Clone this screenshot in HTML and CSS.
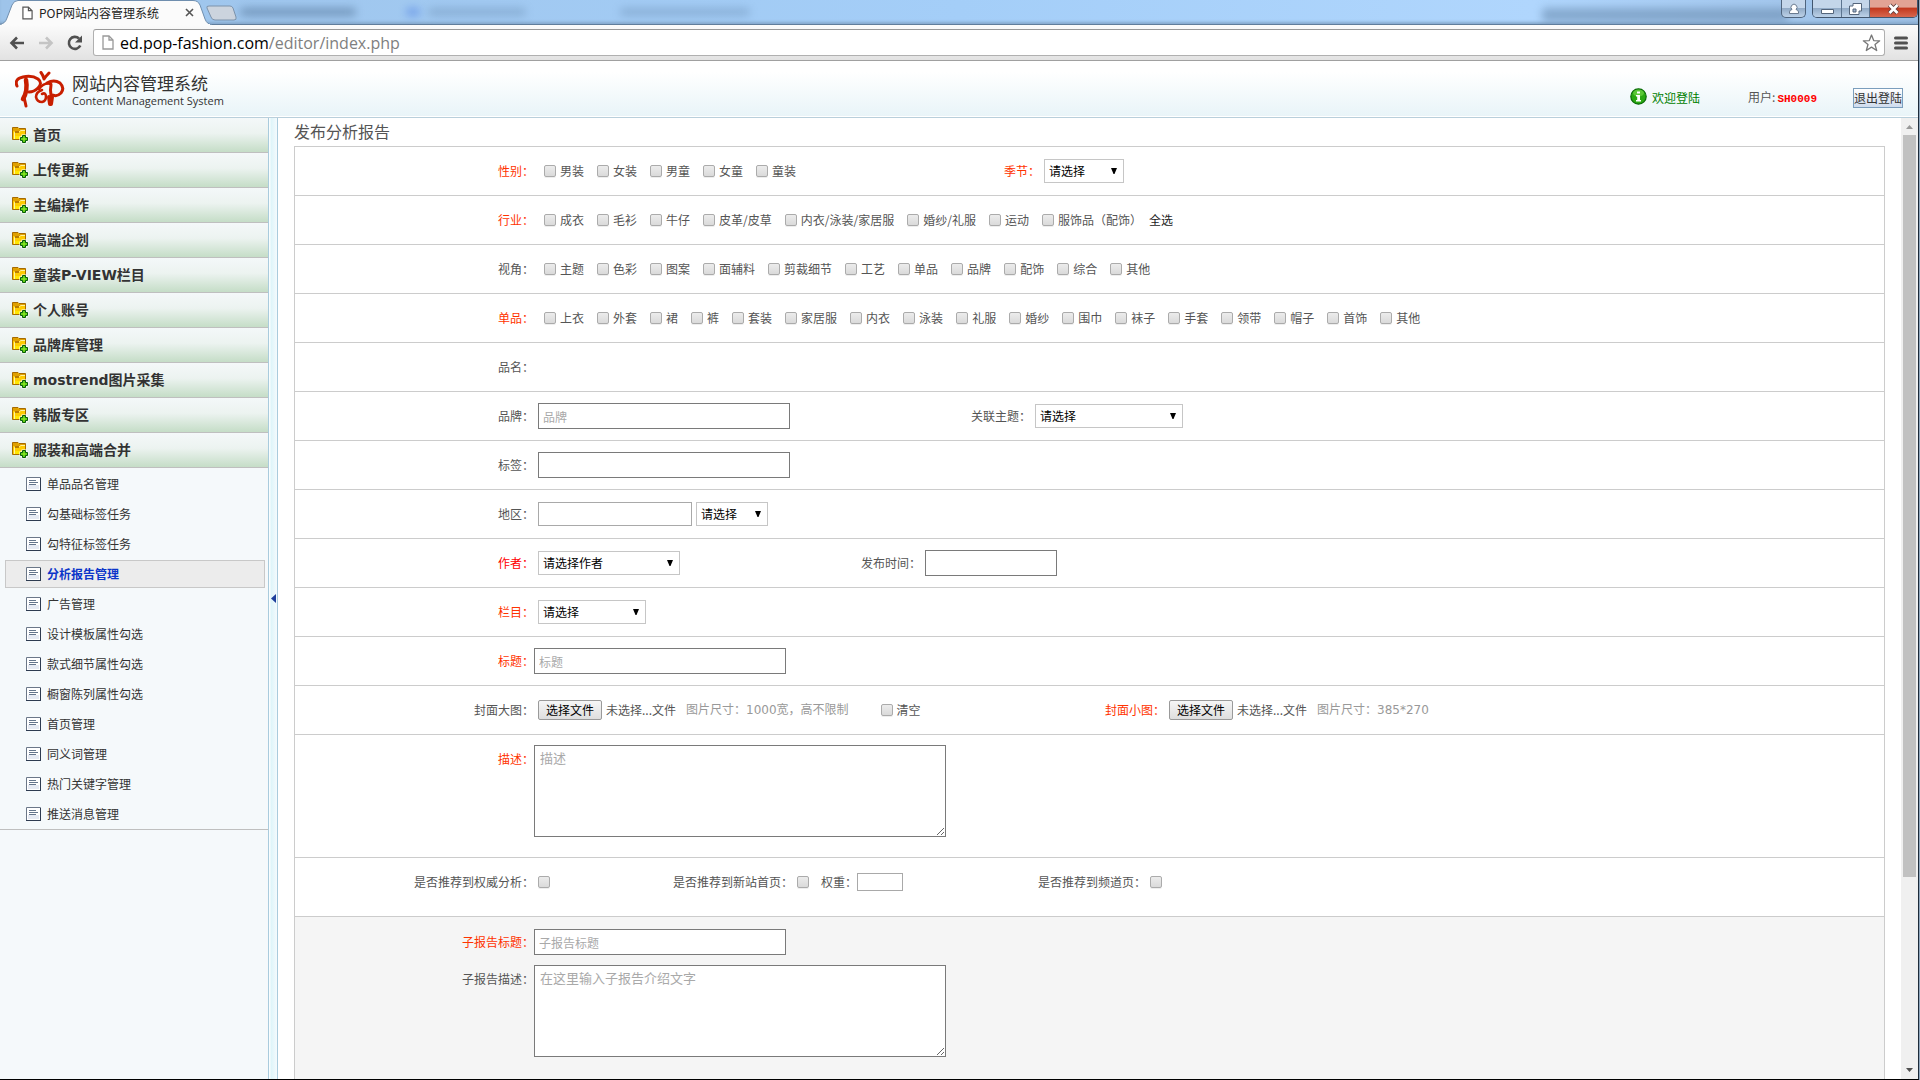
FILE: index.html
```html
<!DOCTYPE html>
<html lang="zh-CN">
<head>
<meta charset="utf-8">
<title>POP网站内容管理系统</title>
<link rel="stylesheet" href="styles.css">
</head>
<body>
<svg class="sprite" aria-hidden="true">
  <symbol id="i-folder" viewBox="0 0 17 17">
    <path d="M.5 12.500V.5H6l1 1h6.500v11z" fill="#fc0" stroke="#a76a00"/>
    <path d="M1 1h4.500l1 1H13v2H1z" fill="#e0a000"/>
    <path d="M2.500 12V5.500H7l1.500-2H13" fill="none" stroke="#fff3a0"/>
    <path d="M3 6h4V4H3z" fill="#b97c00"/>
    <path d="M3 9h10v3H3z" fill="#ffe600"/>
    <path d="M10.500 8.500h3v2h2v3h-2v2h-3v-2h-2v-3h2z" fill="#3c0" stroke="#fff" stroke-width="2"/>
    <path d="M10.500 8.500h3v2h2v3h-2v2h-3v-2h-2v-3h2z" fill="#2db400" stroke="#075c07"/>
    <path d="M12 9v6M9 12h6" stroke="#a4f22e"/>
  </symbol>
  <symbol id="i-doc" viewBox="0 0 15 14">
    <path d="M.5.5h14v13H.5z" fill="#fff" stroke="#6b7788"/>
    <path d="M2 8h11v4H2z" fill="#e6eaf3"/>
    <path d="M0 13.500h15M14.500 1v13" stroke="#2e3b50"/>
    <path d="M3 3.500h7M3 5.500h9M3 7.500h7" stroke="#65758c"/>
  </symbol>
  <symbol id="i-page" viewBox="0 0 12 15">
    <path d="M1 1h6l4 4v9H1z" fill="#fff" stroke="currentColor" stroke-width="1.300"/>
    <path d="M7 1v4h4" fill="none" stroke="currentColor" stroke-width="1.300"/>
  </symbol>
</svg>

<div class="window">
  <header class="tabstrip">
    <div class="ghosts" aria-hidden="true"><i></i><i></i><i></i><i></i><i></i></div>
    <div class="tab">
      <svg class="tab-shape" viewBox="0 0 212 25" preserveAspectRatio="none"><path d="M0 25V24Q5 24 7 18L12 5Q14 .5 18 .5H193Q198 .5 200 5L205 19Q207 24.500 212 24.500V25z" fill="#fbfbfb" stroke="#6f8eae"/><path d="M2 25H210" stroke="#fbfbfb" stroke-width="2"/></svg>
      <svg class="page-icon" width="11" height="14"><use href="#i-page"/></svg>
      <span class="tab-title">POP网站内容管理系统</span>
      <button class="tab-close" aria-label="关闭标签页"><svg width="9" height="9" viewBox="0 0 9 9"><path d="M1 1l7 7M8 1L1 8" stroke="#555" stroke-width="1.600"/></svg></button>
    </div>
    <button class="new-tab" aria-label="新标签页"><svg width="32" height="16" viewBox="0 0 32 16"><path d="M1 3Q0 1 3 1H24Q26 1 27 3L30 12Q31 15 28 15H9Q6 15 5 12z" fill="#ccd4de" stroke="#7d93ab"/></svg></button>
    <div class="win-controls">
      <button class="wc wc-user" aria-label="用户"><svg width="12" height="12" viewBox="0 0 12 12"><path d="M1.500 10.500V9Q1.500 7 4 6.500A3 3 0 1 1 8 6.500Q10.500 7 10.500 9v1.500z" fill="#fff" stroke="#6a7b90"/></svg></button>
      <div class="wc-set">
        <button class="wc" aria-label="最小化"><svg width="13" height="12" viewBox="0 0 13 12"><path d="M.5 6.500h12v4H.5z" fill="#fff" stroke="#54657b"/></svg></button>
        <button class="wc" aria-label="还原"><svg width="13" height="12" viewBox="0 0 13 12"><path d="M4 .5h8.500V8H10v3.500H.5V3H4z" fill="#fff" stroke="#54657b"/><path d="M4 6h3v3H4z" fill="#9fb5d0" stroke="#54657b"/></svg></button>
        <button class="wc wc-close" aria-label="关闭"><svg width="13" height="12" viewBox="0 0 13 12"><path d="M2.500 2l8 8M10.500 2l-8 8" stroke="#5b3a3a" stroke-width="4.500"/><path d="M2.500 2l8 8M10.500 2l-8 8" stroke="#fff" stroke-width="2.800"/></svg></button>
      </div>
    </div>
  </header>

  <nav class="toolbar">
    <button class="tool" aria-label="后退"><svg width="16" height="14" viewBox="0 0 16 14"><path d="M15 7H3M8 1.500L2.500 7 8 12.500" fill="none" stroke="#505050" stroke-width="2.600"/></svg></button>
    <button class="tool" aria-label="前进"><svg width="16" height="14" viewBox="0 0 16 14"><path d="M1 7h12M8 1.500L13.500 7 8 12.500" fill="none" stroke="#c4c4c4" stroke-width="2.600"/></svg></button>
    <button class="tool" aria-label="刷新"><svg width="16" height="16" viewBox="0 0 16 16"><path d="M13.300 10.500A6 6 0 1 1 12 3.500" fill="none" stroke="#505050" stroke-width="2.600"/><path d="M15 .5v7H8z" fill="#505050"/></svg></button>
    <div class="address">
      <svg class="address-icon" width="12" height="15"><use href="#i-page"/></svg>
      <span class="url"><b>ed.pop-fashion.com</b>/editor/index.php</span>
      <button class="star" aria-label="收藏"><svg width="19" height="18" viewBox="0 0 19 18"><path d="M9.500 1l2.200 5.600 6 .2-4.700 3.700 1.700 6-5.200-3.400-5.200 3.400 1.700-6L1.300 6.800l6-.2z" fill="#fff" stroke="#777" stroke-width="1.300" stroke-linejoin="round"/></svg></button>
    </div>
    <button class="menu" aria-label="菜单"><svg width="14" height="14" viewBox="0 0 14 14"><path d="M1.500 2h11M1.500 7h11M1.500 12h11" stroke="#505050" stroke-width="3" stroke-linecap="round"/></svg></button>
  </nav>

  <div class="banner">
    <svg class="logo" viewBox="0 0 50 37" role="img" aria-label="POP">
      <g fill="none" stroke="#c81e00" stroke-linecap="round" stroke-linejoin="round">
        <path d="M2 15Q-1 8 8 6Q17 4 23 8Q28 12 23 17Q19 21 14 21" stroke-width="3"/>
        <path d="M11 9Q13 20 8 28" stroke-width="4.500"/><path d="M9 26L11 35" stroke-width="3"/>
        <path d="M27 19Q21 21 21 26Q22 31 27 31Q31 30 31 26Q31 21 27 23" stroke-width="2.600"/>
        <path d="M26 1.500Q28 4 29 8M34 2Q31 5 29 8" stroke-width="3"/>
        <path d="M24 18Q29 11 36 13" stroke-width="2.600"/>
        <path d="M32 12Q39 8 45 12Q50 17 46 22Q42 26 38 24" stroke-width="3"/>
        <path d="M36 14Q35 19 36 24" stroke-width="3"/><path d="M34 26L35 33M37 26L36 33" stroke-width="4"/>
      </g>
    </svg>
    <div class="brand"><span class="brand-cn">网站内容管理系统</span><span class="brand-en">Content Management System</span></div>
    <div class="account">
      <svg width="17" height="17" viewBox="0 0 17 17" aria-hidden="true"><circle cx="8.500" cy="8.500" r="7.700" fill="#2aa912" stroke="#0a6b08" stroke-width="1.200"/><ellipse cx="8.500" cy="5" rx="5.500" ry="3.500" fill="#7bdc4e" opacity=".6"/><path d="M7 3.500h3v2H7zM6 7h4v5h1v1.500H6V12h1.200V8.500H6z" fill="#fff"/></svg>
      <span class="welcome">欢迎登陆</span>
      <span class="user">用户:<b>SH0009</b></span>
      <button class="logout">退出登陆</button>
    </div>
  </div>

  <div class="body">
    <aside class="sidebar">
      <ul class="groups">
        <li><a href="#"><svg><use href="#i-folder"/></svg>首页</a></li>
        <li><a href="#"><svg><use href="#i-folder"/></svg>上传更新</a></li>
        <li><a href="#"><svg><use href="#i-folder"/></svg>主编操作</a></li>
        <li><a href="#"><svg><use href="#i-folder"/></svg>高端企划</a></li>
        <li><a href="#"><svg><use href="#i-folder"/></svg>童装P-VIEW栏目</a></li>
        <li><a href="#"><svg><use href="#i-folder"/></svg>个人账号</a></li>
        <li><a href="#"><svg><use href="#i-folder"/></svg>品牌库管理</a></li>
        <li><a href="#"><svg><use href="#i-folder"/></svg>mostrend图片采集</a></li>
        <li><a href="#"><svg><use href="#i-folder"/></svg>韩版专区</a></li>
        <li><a href="#"><svg><use href="#i-folder"/></svg>服装和高端合并</a></li>
      </ul>
      <ul class="items">
        <li><a href="#"><svg><use href="#i-doc"/></svg>单品品名管理</a></li>
        <li><a href="#"><svg><use href="#i-doc"/></svg>勾基础标签任务</a></li>
        <li><a href="#"><svg><use href="#i-doc"/></svg>勾特征标签任务</a></li>
        <li><a href="#" class="active"><svg><use href="#i-doc"/></svg>分析报告管理</a></li>
        <li><a href="#"><svg><use href="#i-doc"/></svg>广告管理</a></li>
        <li><a href="#"><svg><use href="#i-doc"/></svg>设计模板属性勾选</a></li>
        <li><a href="#"><svg><use href="#i-doc"/></svg>款式细节属性勾选</a></li>
        <li><a href="#"><svg><use href="#i-doc"/></svg>橱窗陈列属性勾选</a></li>
        <li><a href="#"><svg><use href="#i-doc"/></svg>首页管理</a></li>
        <li><a href="#"><svg><use href="#i-doc"/></svg>同义词管理</a></li>
        <li><a href="#"><svg><use href="#i-doc"/></svg>热门关键字管理</a></li>
        <li><a href="#"><svg><use href="#i-doc"/></svg>推送消息管理</a></li>
      </ul>
    </aside>
    <button class="splitter" aria-label="收起菜单"><svg width="5" height="9" viewBox="0 0 5 9"><path d="M5 0v9L0 4.500z" fill="#1e3f9c"/></svg></button>

    <main class="main">
      <h1>发布分析报告</h1>
      <form class="form">
        <div class="row">
          <div class="pair pair-gender">
            <span class="label req">性别：</span>
            <div class="checks">
              <label><input type="checkbox">男装</label><label><input type="checkbox">女装</label><label><input type="checkbox">男童</label><label><input type="checkbox">女童</label><label><input type="checkbox">童装</label>
            </div>
          </div>
          <div class="pair">
            <label class="req" for="season">季节：</label>
            <select id="season" class="w80"><option>请选择</option></select>
          </div>
        </div>
        <div class="row">
          <div class="pair">
            <span class="label req">行业：</span>
            <div class="checks">
              <label><input type="checkbox">成衣</label><label><input type="checkbox">毛衫</label><label><input type="checkbox">牛仔</label><label><input type="checkbox">皮革/皮草</label><label><input type="checkbox">内衣/泳装/家居服</label><label><input type="checkbox">婚纱/礼服</label><label><input type="checkbox">运动</label><label><input type="checkbox">服饰品（配饰）</label>
            </div>
            <a class="all" href="#">全选</a>
          </div>
        </div>
        <div class="row">
          <div class="pair">
            <span class="label">视角：</span>
            <div class="checks">
              <label><input type="checkbox">主题</label><label><input type="checkbox">色彩</label><label><input type="checkbox">图案</label><label><input type="checkbox">面辅料</label><label><input type="checkbox">剪裁细节</label><label><input type="checkbox">工艺</label><label><input type="checkbox">单品</label><label><input type="checkbox">品牌</label><label><input type="checkbox">配饰</label><label><input type="checkbox">综合</label><label><input type="checkbox">其他</label>
            </div>
          </div>
        </div>
        <div class="row">
          <div class="pair">
            <span class="label req">单品：</span>
            <div class="checks">
              <label><input type="checkbox">上衣</label><label><input type="checkbox">外套</label><label><input type="checkbox">裙</label><label><input type="checkbox">裤</label><label><input type="checkbox">套装</label><label><input type="checkbox">家居服</label><label><input type="checkbox">内衣</label><label><input type="checkbox">泳装</label><label><input type="checkbox">礼服</label><label><input type="checkbox">婚纱</label><label><input type="checkbox">围巾</label><label><input type="checkbox">袜子</label><label><input type="checkbox">手套</label><label><input type="checkbox">领带</label><label><input type="checkbox">帽子</label><label><input type="checkbox">首饰</label><label><input type="checkbox">其他</label>
            </div>
          </div>
        </div>
        <div class="row"><div class="pair"><span class="label">品名：</span></div></div>
        <div class="row">
          <div class="pair pair-brand">
            <label class="label" for="brand">品牌：</label>
            <input id="brand" class="w252" type="text" placeholder="品牌">
          </div>
          <div class="pair">
            <label for="topic">关联主题：</label>
            <select id="topic" class="w148"><option>请选择</option></select>
          </div>
        </div>
        <div class="row">
          <div class="pair"><label class="label" for="tags">标签：</label><input id="tags" class="w252" type="text"></div>
        </div>
        <div class="row">
          <div class="pair">
            <label class="label" for="area">地区：</label>
            <input id="area" class="w154 light" type="text">
            <select class="w72" aria-label="地区"><option>请选择</option></select>
          </div>
        </div>
        <div class="row">
          <div class="pair pair-author">
            <label class="label must" for="author">作者：</label>
            <select id="author" class="w142"><option>请选择作者</option></select>
          </div>
          <div class="pair"><label for="date">发布时间：</label><input id="date" class="w132" type="text"></div>
        </div>
        <div class="row">
          <div class="pair"><label class="label req" for="column">栏目：</label><select id="column" class="w108"><option>请选择</option></select></div>
        </div>
        <div class="row">
          <div class="pair tight"><label class="label req" for="title">标题：</label><input id="title" class="w252" type="text" placeholder="标题"></div>
        </div>
        <div class="row">
          <div class="pair pair-cover">
            <span class="label">封面大图：</span>
            <button type="button" class="file">选择文件</button><span class="picked">未选择...文件</span>
            <span class="hint">图片尺寸：1000宽，高不限制</span>
            <label class="clear"><input type="checkbox">清空</label>
          </div>
          <div class="pair">
            <span class="req">封面小图：</span>
            <button type="button" class="file">选择文件</button><span class="picked">未选择...文件</span>
            <span class="hint">图片尺寸：385*270</span>
          </div>
        </div>
        <div class="row row-area">
          <div class="pair tight"><label class="label req" for="desc">描述：</label><textarea id="desc" placeholder="描述"></textarea></div>
        </div>
        <div class="row row-flags">
          <div class="pair pair-flag1"><label class="label" for="f1">是否推荐到权威分析：</label><input id="f1" type="checkbox"></div>
          <div class="pair pair-flag2">
            <label for="f2">是否推荐到新站首页：</label><input id="f2" type="checkbox">
            <label class="weight">权重：<input class="w46 light" type="text"></label>
          </div>
          <div class="pair"><label for="f3">是否推荐到频道页：</label><input id="f3" type="checkbox"></div>
        </div>
        <div class="sub">
          <div class="pair tight"><label class="label req" for="subtitle">子报告标题：</label><input id="subtitle" class="w252" type="text" placeholder="子报告标题"></div>
          <div class="pair tight top"><label class="label" for="subdesc">子报告描述：</label><textarea id="subdesc" placeholder="在这里输入子报告介绍文字"></textarea></div>
        </div>
      </form>
    </main>
    <div class="scroll" aria-hidden="true">
      <svg width="7" height="4" viewBox="0 0 7 4"><path d="M0 4h7L3.500 0z" fill="#999"/></svg>
      <div class="track"><div class="thumb"></div></div>
      <svg width="7" height="4" viewBox="0 0 7 4"><path d="M0 0h7L3.500 4z" fill="#505050"/></svg>
    </div>
  </div>
</div>
</body>
</html>
```
FILE: styles.css
```css
* { box-sizing: border-box; }

body {
  margin: 0;
  height: 100vh;
  overflow: hidden;
  background: #8fa6bd;
  color: #555;
  font: 12px/16px "Noto Sans CJK SC", sans-serif;
}

button, input, select, textarea { font: inherit; margin: 0; }
button { padding: 0; border: 0; background: none; display: flex; align-items: center; justify-content: center; }
a { color: inherit; text-decoration: none; }
ul { list-style: none; margin: 0; padding: 0; }
svg { flex: none; }
.sprite { display: none; }

.window {
  display: flex;
  flex-direction: column;
  height: 100%;
  margin-right: 1px;
  background: #fff;
  border-right: 1px solid #1d2b3a;
  border-bottom: 1px solid #000;
}

/* Browser frame */
.tabstrip {
  position: relative;
  display: flex;
  flex: none;
  height: 25px;
  overflow: hidden;
  background: linear-gradient(90deg, #9ec4ea, #a4cef8 50%, #b0d6fd 80%, #9dbfe4);
  box-shadow: inset 0 -1px #607d9b, inset 0 -4px 3px -1px #86a9cc;
}
.ghosts i { position: absolute; top: 8px; height: 8px; border-radius: 4px; background: #5c7ea2; opacity: .65; filter: blur(4px); }
.ghosts i:nth-child(1) { left: 240px; width: 116px; }
.ghosts i:nth-child(2) { left: 406px; width: 14px; background: #3c6fe0; opacity: .45; }
.ghosts i:nth-child(3) { left: 428px; width: 98px; opacity: .35; }
.ghosts i:nth-child(4) { left: 620px; width: 130px; opacity: .35; }
.ghosts i:nth-child(5) { right: 130px; width: 246px; height: 14px; opacity: .5; }
.tab { position: relative; display: flex; align-items: center; width: 212px; padding-left: 22px; color: #222; }
.tab > * { position: relative; }
.tab .tab-shape { position: absolute; left: 0; top: 0; width: 100%; height: 25px; }
.page-icon { color: #555; }
.tab-title { flex: 1; margin-left: 6px; white-space: nowrap; }
.tab-close { margin-right: 18px; }
.new-tab { margin-left: -6px; }
.win-controls { position: relative; display: flex; gap: 6px; margin-left: auto; }
.wc { width: 28px; height: 17px; border-left: 1px solid #5d7590; background: linear-gradient(#c4d6ea 45%, #92abc7 50%, #bdd2e8); }
.wc-user { width: 25px; border: 1px solid #4f657e; border-top: 0; border-radius: 0 0 5px 5px; margin-bottom: 7px; height: 18px; }
.wc-set { display: flex; height: 18px; border: 1px solid #42566e; border-top: 0; border-radius: 0 0 5px 5px; overflow: hidden; }
.wc-set .wc:first-child { border-left: 0; }
.wc-close { width: 48px; background: linear-gradient(#e2a394 40%, #c33a20 50%, #d8674e); }

.toolbar {
  display: flex;
  align-items: center;
  flex: none;
  height: 36px;
  padding: 0 10px 0 9px;
  background: linear-gradient(#fbfbfb, #e2e2e2);
  border-bottom: 1px solid #a0a0a0;
}
.tool { width: 16px; margin-right: 13px; }
.tool:nth-child(3) { margin-right: 10px; }
.address {
  display: flex;
  align-items: center;
  flex: 1;
  height: 27px;
  padding: 0 3px 0 8px;
  background: #fff;
  border: 1px solid #b0b0b0;
  border-top-color: #999;
  border-radius: 3px;
}
.address-icon { color: #999; }
.url { flex: 1; margin-left: 6px; color: #808080; font: 16px/24px "Open Sans", "Noto Sans", sans-serif; }
.url b { color: #000; font-weight: 400; }
.menu { margin-left: 9px; }

/* Site header */
.banner {
  display: flex;
  flex: none;
  height: 57px;
  padding: 10px 15px 0;
  background: linear-gradient(#fff 20%, #e8f4f8);
  border-bottom: 1px solid #b9cfdb;
  box-shadow: inset 0 -1px #fff;
}
.logo { width: 50px; height: 37px; }
.brand { display: flex; flex-direction: column; margin-left: 7px; color: #333; white-space: nowrap; }
.brand-cn { font-size: 17px; line-height: 24px; }
.brand-en { font: 11px/12px "Open Sans", sans-serif; }
.account { display: flex; align-items: center; height: 54px; margin-left: auto; }
.account > svg { margin-top: -4px; }
.welcome { margin: 0 48px 0 5px; color: #008000; }
.user b { color: #f00; font: bold 11px/16px "Liberation Mono", monospace; margin-left: 2px; }
.logout { margin-left: 36px; width: 50px; height: 20px; border: 1px solid #7b9ebd; background: linear-gradient(#fff, #cfdcee); color: #333; white-space: nowrap; }

/* Sidebar */
.body { display: flex; flex: 1; min-height: 0; }
.sidebar { flex: none; width: 268px; background: #f5f9fb; }
.groups a {
  display: flex;
  align-items: center;
  height: 35px;
  padding-left: 12px;
  gap: 4px;
  border-bottom: 1px solid #bfbfbf;
  background: linear-gradient(#f4f8f9, #ecf3f0 45%, #c5ddc7);
  color: #333;
  font: bold 14px/20px "DejaVu Sans", "Noto Sans CJK SC", sans-serif;
}
.groups svg { width: 17px; height: 17px; }
.items { padding-top: 1px; border-bottom: 1px solid #bfbfbf; }
.items li { padding: 1px 3px 1px 5px; height: 30px; }
.items a { display: flex; align-items: center; gap: 6px; height: 28px; padding-left: 20px; border: 1px solid transparent; color: #333; }
.items svg { width: 15px; height: 14px; }
.items .active { border-color: #c8c8c8; background: #ececec; color: #0b35c9; font-weight: bold; }
.splitter { flex: none; width: 10px; border: solid #a9cbdd; border-width: 0 1px; background: linear-gradient(90deg, #fff, #dff5fa 30%, #f4fafd); }

/* Report form */
.main { flex: 1; min-width: 0; padding: 0 16px; overflow: hidden; }
h1 { margin: 0; padding-bottom: 2px; font-size: 16px; line-height: 26px; font-weight: 400; }
.form { border: 1px solid #ccc; }
.row { display: flex; align-items: center; height: 49px; border-bottom: 1px solid #ccc; }
.pair { display: flex; align-items: center; flex: none; gap: 4px; white-space: nowrap; }
.tight { gap: 0; }
.pair-gender { width: 709px; }
.pair-brand { width: 676px; }
.pair-author { width: 566px; }
.pair-cover { width: 810px; }
.pair-flag1 { width: 378px; }
.pair-flag2 { width: 365px; }
.label { width: 239px; text-align: right; }
.req { color: #f30; }
.must { color: #f00; }
.checks { display: flex; gap: 13px; margin-left: 6px; }
.checks label, .clear { display: flex; align-items: center; gap: 4px; }
.all { margin-left: 3px; color: #222; }

input[type="checkbox"] {
  appearance: none;
  width: 12px;
  height: 12px;
  border: 1px solid #ababab;
  border-radius: 2px;
  background: linear-gradient(#ececec, #dadada);
  box-shadow: 0 1px #eee;
}
input[type="text"], textarea { border: 1px solid #7a7a7a; border-radius: 0; background: #fff; padding: 0 4px; outline: 0; }
input[type="text"] { height: 26px; }
input.light[type="text"] { height: 24px; border-color: #a9a9a9; }
::placeholder { color: #a9a9a9; opacity: 1; }
select {
  appearance: none;
  height: 24px;
  padding: 0 4px;
  border: 1px solid #c6c6c6;
  border-radius: 0;
  color: #000;
  background: #fff url("data:image/svg+xml,%3Csvg xmlns='http://www.w3.org/2000/svg' width='6' height='6'%3E%3Cpath d='M0 0h6L3.500 6h-1z'/%3E%3C/svg%3E") no-repeat right 6px center;
}
textarea { width: 412px; height: 92px; padding: 4px 5px; font-size: 13px; line-height: 16px; resize: both; }
.w46 { width: 46px; }
.w72 { width: 72px; }
.w80 { width: 80px; }
.w108 { width: 108px; }
.w132 { width: 132px; }
.w142 { width: 142px; }
.w148 { width: 148px; }
.w154 { width: 154px; }
.w252 { width: 252px; }

.file { width: 64px; height: 20px; border: 1px solid #9a9a9a; border-radius: 2px; background: linear-gradient(#f6f6f6, #dedede); color: #000; }
.picked { width: 72px; }
.hint { color: #999; font-family: "DejaVu Sans", "Noto Sans CJK SC", sans-serif; margin-left: 4px; }
.clear { margin-left: 28px; }

.row-area { height: 123px; align-items: flex-start; padding-top: 10px; }
.row-area .pair, .top { align-items: flex-start; }
.row-area .label, .top .label { padding-top: 6px; }
.row-flags { height: 59px; padding-bottom: 10px; }
.weight { display: flex; align-items: center; margin-left: 8px; }
.weight input.light[type="text"] { height: 18px; }
.sub { display: flex; flex-direction: column; gap: 10px; height: 400px; padding-top: 12px; background: #f5f5f5; }

/* Scroll bar of the content frame */
.scroll { display: flex; flex-direction: column; align-items: center; flex: none; width: 17px; padding: 7px 2px; gap: 6px; background: #f0f0f0; }
.track { flex: 1; width: 13px; }
.thumb { height: 80%; background: #c1c1c1; }
```
